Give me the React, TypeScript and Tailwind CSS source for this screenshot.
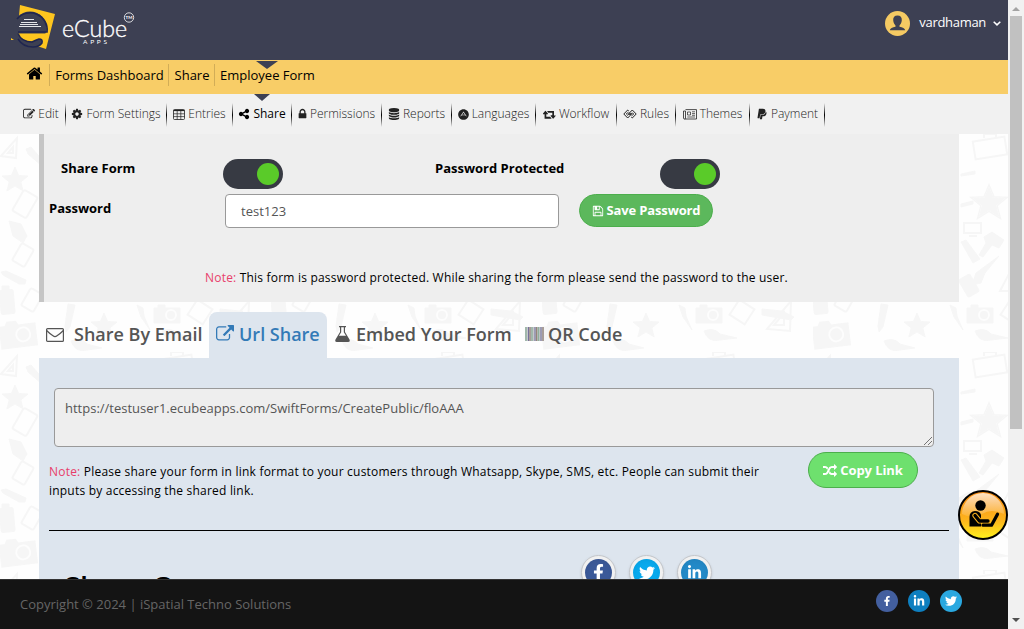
import type { ReactNode } from "react";
import { FaAdn, FaFacebookF, FaLinkedinIn, FaPaypal, FaTwitter } from "react-icons/fa";

const PATHS = {
  edit: "M888 1184l116-116-152-152-116 116v56h96v96h56zm440-720q-16-16-33 1l-350 350q-17 17-1 33t33-1l350-350q17-17 1-33zm80 594v190q0 119-84.5 203.5t-203.5 84.5h-832q-119 0-203.5-84.5t-84.5-203.5v-832q0-119 84.5-203.5t203.5-84.5h832q63 0 117 25 15 7 18 23 3 17-9 29l-49 49q-14 14-32 8-23-6-45-6h-832q-66 0-113 47t-47 113v832q0 66 47 113t113 47h832q66 0 113-47t47-113v-126q0-13 9-22l64-64q15-15 35-7t20 29zm-96-738l288 288-672 672h-288v-288zm444 132l-92 92-288-288 92-92q28-28 68-28t68 28l152 152q28 28 28 68t-28 68z",
  cog: "M1152 896q0-106-75-181t-181-75-181 75-75 181 75 181 181 75 181-75 75-181zm512-109v222q0 12-8 23t-20 13l-185 28q-19 54-39 91 35 50 107 138 10 12 10 25t-9 23q-27 37-99 108t-94 71q-12 0-26-9l-138-108q-44 23-91 38-16 136-29 186-7 28-36 28h-222q-14 0-24.5-8.5t-11.5-21.5l-28-184q-49-16-90-37l-141 107q-10 9-25 9-14 0-25-11-126-114-165-168-7-10-7-23 0-12 8-23 15-21 51-66.5t54-70.5q-27-50-41-99l-183-27q-13-2-21-12.5t-8-23.5v-222q0-12 8-23t19-13l186-28q14-46 39-92-40-57-107-138-10-12-10-24 0-10 9-23 26-36 98.5-107.5t94.5-71.5q13 0 26 10l138 107q44-23 91-38 16-136 29-186 7-28 36-28h222q14 0 24.5 8.5t11.5 21.5l28 184q49 16 90 37l142-107q9-9 24-9 13 0 25 10 129 119 165 170 7 8 7 22 0 12-8 23-15 21-51 66.5t-54 70.5q26 50 41 98l183 28q13 2 21 12.5t8 23.5z",
  share: "M1344 1024q133 0 226.5 93.5t93.5 226.5-93.5 226.5-226.5 93.5-226.5-93.5-93.5-226.5q0-12 2-34l-360-180q-92 86-218 86-133 0-226.5-93.5t-93.5-226.5 93.5-226.5 226.5-93.5q126 0 218 86l360-180q-2-22-2-34 0-133 93.5-226.5t226.5-93.5 226.5 93.5 93.5 226.5-93.5 226.5-226.5 93.5q-126 0-218-86l-360 180q2 22 2 34t-2 34l360 180q92-86 218-86z",
  lock: "M640 768h512v-192q0-106-75-181t-181-75-181 75-75 181v192zm832 96v576q0 40-28 68t-68 28h-960q-40 0-68-28t-28-68v-576q0-40 28-68t68-28h32v-192q0-184 132-316t316-132 316 132 132 316v192h32q40 0 68 28t28 68z",
  database: "M896 768q237 0 443-43t325-127v170q0 69-103 128t-280 93.5-385 34.5-385-34.5-280-93.5-103-128v-170q119 84 325 127t443 43zm0 768q237 0 443-43t325-127v170q0 69-103 128t-280 93.5-385 34.5-385-34.5-280-93.5-103-128v-170q119 84 325 127t443 43zm0-384q237 0 443-43t325-127v170q0 69-103 128t-280 93.5-385 34.5-385-34.5-280-93.5-103-128v-170q119 84 325 127t443 43zm0-1152q208 0 385 34.5t280 93.5 103 128v128q0 69-103 128t-280 93.5-385 34.5-385-34.5-280-93.5-103-128v-128q0-69 103-128t280-93.5 385-34.5z",
  home: "M1472 992v480q0 26-19 45t-45 19h-384v-384h-256v384h-384q-26 0-45-19t-19-45v-480q0-1 .5-3t.5-3l575-474 575 474q1 2 1 6zm223-69l-62 74q-8 9-21 11h-3q-13 0-21-7l-692-577-692 577q-12 8-24 7-13-2-21-11l-62-74q-8-10-7-23.5t11-21.5l719-599q32-26 76-26t76 26l244 204v-195q0-14 9-23t23-9h192q14 0 23 9t9 23v408l219 182q10 8 11 21.5t-7 23.5z",
  retweet: "M1216 1568q0 13-9.5 22.5t-22.5 9.5h-960q-8 0-13.5-2t-9-7-5.5-8-3-11.5-1-11.5-.5-13 .5-13v-600h-192q-26 0-45-19t-19-45q0-24 15-41l320-384q19-22 49-22t49 22l320 384q15 17 15 41 0 26-19 45t-45 19h-192v384h576q16 0 25 11l160 192q7 11 7 21zm640-416q0 24-15 41l-320 384q-20 23-49 23t-49-23l-320-384q-15-17-15-41 0-26 19-45t45-19h192v-384h-576q-16 0-25-12l-160-192q-7-9-7-20 0-13 9.5-22.5t22.5-9.5h960q8 0 13.5 2t9 7 5.5 8 3 11.5 1 11.5.5 13-.5 13v600h192q26 0 45 19t19 45z",
  random: "M666 481q-60 92-137 273-22-45-37-72.5t-40.5-63.5-51-56.5-63-35-81.5-14.5h-224q-14 0-23-9t-9-23v-192q0-14 9-23t23-9h224q250 0 410 225zm1126 799q0 14-9 23l-320 320q-9 9-23 9-13 0-22.5-9.5t-9.5-22.5v-192q-32 0-85 .5t-81 1-73-1-71-5-64-10.5-63-18.5-58-28.5-59-40-55-53.5-56-69.5q59-93 136-273 22 45 37 72.5t40.5 63.5 51 56.5 63 35 81.5 14.5h256v-192q0-14 9-23t23-9q12 0 24 10l319 319q9 9 9 23zm0-896q0 14-9 23l-320 320q-9 9-23 9-13 0-22.5-9.5t-9.5-22.5v-192h-256q-48 0-87 15t-69 45-51 61.5-45 77.5q-32 62-78 171-29 66-49.5 111t-54 105-64 100-74 83-90 68.5-106.5 42-128 16.5h-224q-14 0-23-9t-9-23v-192q0-14 9-23t23-9h224q48 0 87-15t69-45 51-61.5 45-77.5q32-62 78-171 29-66 49.5-111t54-105 64-100 74-83 90-68.5 106.5-42 128-16.5h256v-192q0-14 9-23t23-9q12 0 24 10l319 319q9 9 9 23z",
  external: "M1408 928v320q0 119-84.5 203.5t-203.5 84.5h-832q-119 0-203.5-84.5t-84.5-203.5v-832q0-119 84.5-203.5t203.5-84.5h704q14 0 23 9t9 23v64q0 14-9 23t-23 9h-704q-66 0-113 47t-47 113v832q0 66 47 113t113 47h832q66 0 113-47t47-113v-320q0-14 9-23t23-9h64q14 0 23 9t9 23zm384-864v512q0 26-19 45t-45 19-45-19l-176-176-652 652q-10 10-23 10t-23-10l-114-114q-10-10-10-23t10-23l652-652-176-176q-19-19-19-45t19-45 45-19h512q26 0 45 19t19 45z",
  save: "M512 1536h768v-384h-768v384zm896 0h128v-896q0-14-10-38.5t-20-34.5l-281-281q-10-10-34-20t-39-10v416q0 40-28 68t-68 28h-576q-40 0-68-28t-28-68v-416h-128v1280h128v-416q0-40 28-68t68-28h832q40 0 68 28t28 68v416zm-384-928v-320q0-13-9.5-22.5t-22.5-9.5h-192q-13 0-22.5 9.5t-9.5 22.5v320q0 13 9.5 22.5t22.5 9.5h192q13 0 22.5-9.5t9.5-22.5zm640 32v928q0 40-28 68t-68 28h-1344q-40 0-68-28t-28-68v-1344q0-40 28-68t68-28h928q40 0 88 20t76 48l280 280q28 28 48 76t20 88z",
};

function Glyph({ name, className, box = "0 0 1792 1792" }: { name: keyof typeof PATHS; className: string; box?: string }) {
  return (
    <svg viewBox={box} fill="currentColor" className={`shrink-0 ${className}`}>
      <path d={PATHS[name]} />
    </svg>
  );
}

function TableIcon() {
  return (
    <svg viewBox="0 0 12 11" className="h-[11px] w-3 shrink-0" fill="none" stroke="currentColor" strokeWidth=".8">
      <rect x=".5" y=".5" width="11" height="10" rx="1" />
      <path d="M.5 1.5h11" strokeWidth="1.2" />
      <path d="M4.2 2v8.5M7.8 2v8.5M.5 4.8h11M.5 7.6h11" strokeWidth=".7" />
    </svg>
  );
}

function RulesIcon() {
  return (
    <svg viewBox="0 0 14 10" className="h-2.5 w-3.5 shrink-0" fill="none" stroke="currentColor" strokeWidth="1">
      <path d="M5.8 2L4.7 1 .8 5l3.9 4 3.5-3.6L6.8 4 4.6 6.2 3.4 5l1.8-1.8" />
      <path d="M8.2 8l1.1 1 3.9-4-3.9-4-3.5 3.6L7.2 6l2.2-2.2L10.6 5 8.8 6.8" />
    </svg>
  );
}

function NewsIcon() {
  return (
    <svg viewBox="0 0 14 11" className="h-[11px] w-3.5 shrink-0" fill="none" stroke="currentColor" strokeWidth=".8">
      <path d="M2.5 .6h11v9.400h-12q-1 0-1-1V2h2v7q0 1-.8 1" />
      <path d="M4.5 3h3v3h-3zM9 2.800h3M9 4.600h3M9 6.300h3M4.300 8h7.700" strokeWidth=".7" />
    </svg>
  );
}

const STAR = "M0-13L3.6-4.5 13-4 5.8 2 8.2 11 0 6-8.2 11-5.8 2-13-4-3.6-4.5z";

/* Faint stationery wallpaper, repeated behind the page. */
function Wallpaper() {
  return (
    <svg className="absolute inset-0 h-full w-full" aria-hidden="true">
      <defs>
        <pattern id="doodles" width="271" height="218" patternUnits="userSpaceOnUse">
          <g fill="#f6f6f6" stroke="#f6f6f6">
            <g fill="none" strokeWidth="2">
              <path d="M1 22L17 4l-1 20zM8 19l5-6v6z" />
              <rect x="-8" y="-12" width="16" height="24" rx="2" transform="translate(25 70) rotate(30)" />
              <rect x="-7" y="-10" width="14" height="20" rx="2" transform="translate(23 121) rotate(30)" />
              <rect x="-7" y="-10" width="14" height="20" rx="2" transform="translate(32 166) rotate(30)" />
              <rect x="-16" y="-9" width="32" height="18" transform="translate(177 14) rotate(-9)" />
              <path d="M171 4v-4h12v4" />
              <rect x="151" y="89" width="17" height="10" />
              <path d="M156 102h8M187 157l22-42v42zM197 150l7-12v12z" />
              <rect x="-9" y="-9" width="18" height="18" transform="translate(200 178) rotate(33)" />
              <path d={STAR} transform="translate(176 69) scale(1.4)" strokeWidth="1" />
              <path d="M225 195l24-28-1 30zM232 191l10-12v12z" />
            </g>
            <path d={STAR} transform="translate(176 69) scale(1.15)" />
            <path d={STAR} transform="translate(15 46)" />
            <path d={STAR} transform="translate(104 192)" />
            <path d={STAR} transform="translate(235 84)" />
            <path d="M26 15l5-2 13 15-2 4-14-12z" />
            <path d="M9 87l12 3 6 12-4 7-10-7z" />
            <path d="M1 138l5-1 20 9-1 4-6 0-16-9z" />
            <rect x="0" y="156" width="14" height="24" rx="2" transform="rotate(-5 7 166)" />
            <path d="M2 152h7v4H2z" />
            <path d="M65 192l3-22 7 1-5 22-4 5z" />
            <path d="M137 171l6 3 1 8 6 14-9-13z" />
            <path d="M71 207q10-4 16 3l15 4-15 2q-12 3-16-9z" />
            <path d="M162 197q10-4 16 3l17 4-17 2q-12 3-16-9z" />
            <path d="M148 108l5-2 14 19-7 4zM171 103l8-5 12 8-5 8-7-3-9 12-4-2 7-12z" />
            <path d="M186 122l-14 17-4 10-9 2 4-12z" />
            <rect x="149" y="142" width="13" height="20" rx="2" transform="rotate(-30 155 151)" />
            <path d="M148 40l14-3v3l-14 2zM148 70l12-3v3l-12 3z" />
            <path d="M220 175l20 2 12 6-3 3-29-5z" />
            <g transform="translate(18 199) rotate(-7)">
              <path d="M-18-8h6l2-4h9l2 4h17v22h-36z" />
              <circle cx="5" cy="2" r="7" stroke="#fdfdfd" strokeWidth="2" />
            </g>
            <g transform="translate(167 180)">
              <path d="M-13-6h4v-3h7v3h15v15h-26z" />
              <circle cx="4" cy="1" r="5" stroke="#fdfdfd" strokeWidth="2" />
            </g>
          </g>
        </pattern>
      </defs>
      <rect width="100%" height="100%" fill="#fefefe" />
      <rect width="100%" height="100%" fill="url(#doodles)" />
    </svg>
  );
}

function Logo() {
  return (
    <svg viewBox="0 0 140 60" className="h-[60px] w-[140px]">
      <path d="M20 5l35 9-9 35-9-3 4-7-12 2-12-4z" fill="#fdc51f" />
      <path d="M11 38l3 2-3 0z" fill="#fdc51f" />
      <circle cx="30" cy="28" r="16.5" fill="#3d4053" />
      <path d="M17 19a17 17 0 0 1 30 13H18" fill="none" stroke="#20264f" strokeWidth="1.7" />
      <path d="M18 33.5h28.5q-1 4-4 6-3-1.5-6 1.5-5 1-9 0-8-2-9.5-7.5z" fill="#fdc51f" />
      <path d="M18 33.5q3.5 8.5 14 8.5 4-2 7-3 4 0 3 4-3 4-9 4-10 0-15-8" fill="#3d4053" stroke="#20264f" strokeWidth="1.5" />
      <path d="M24 19.5h10M21 22.5h16M19 26.5h22M20 24.5h18" stroke="#e5e6ea" strokeWidth="1" />
      <text x="62" y="36.5" fontFamily="Lato, 'Open Sans', sans-serif" fontSize="23.5" fontWeight="300" fill="#fff" stroke="#fff" strokeWidth=".35" textLength="65" lengthAdjust="spacingAndGlyphs">eCube</text>
      <text x="83" y="44" fontFamily="Lato, 'Open Sans', sans-serif" fontSize="6.5" fill="#fff" textLength="24">APPS</text>
      <circle cx="129" cy="17.5" r="4.7" fill="none" stroke="#fff" strokeWidth=".8" />
      <text x="129" y="19.3" fontFamily="Lato, sans-serif" fontSize="4.5" fontWeight="700" textAnchor="middle" fill="#fff">TM</text>
    </svg>
  );
}

function MenuItem({ width, icon, label, active }: { width: string; icon: ReactNode; label: string; active?: boolean }) {
  return (
    <li className={`relative flex h-10 shrink-0 items-center ${width} ${active ? "font-normal text-black" : "font-light text-[#222]"}`}>
      {active && <span className="absolute top-0 left-[21px] h-[7px] w-4 bg-[#3d4053] [clip-path:polygon(0_0,100%_0,50%_100%)]" />}
      <span className="flex flex-1 items-center justify-center gap-[3px] whitespace-nowrap">
        {icon}
        <span>{label}</span>
      </span>
      <span className="mt-0.5 h-6 w-px bg-linear-to-b from-transparent via-black to-transparent" />
    </li>
  );
}

function Toggle() {
  return (
    <span className="flex h-[30px] w-[60px] items-center justify-end rounded-full bg-[#373a43] pr-1">
      <span className="size-[22px] rounded-full bg-[#5acb29]" />
    </span>
  );
}

function Bubble({ color, children }: { color: string; children: ReactNode }) {
  return (
    <span className="flex size-[35px] items-center justify-center rounded-full border border-[#c4c7cb] bg-[#f1f1f1] shadow-sm">
      <span className={`flex size-[27px] items-center justify-center rounded-full text-white shadow-inner ${color}`}>{children}</span>
    </span>
  );
}

export default function App() {
  return (
    <div className="flex h-[629px] w-[1024px] overflow-hidden font-['Open_Sans',sans-serif] text-[13px] text-black">
      <div className="relative flex w-[1008px] flex-col">
        <header className="flex h-[60px] shrink-0 justify-between bg-[#3d4053]">
          <Logo />
          <div className="flex h-[46px] items-center pr-[7px] text-white">
            <svg viewBox="0 0 25 25" className="mr-[9px] size-[25px]">
              <circle cx="12.5" cy="12.5" r="12.5" fill="#f5ca63" />
              <path d="M12.5 4.5c3 0 4.500 2 4.300 4.700-.2 2.500-1.300 4.100-2.300 5.300v1.200c3 .6 5.500 1.500 5.700 3.500h-15.400c.2-2 2.700-2.900 5.700-3.500v-1.200c-1-1.200-2.100-2.800-2.300-5.300-.2-2.700 1.300-4.700 4.300-4.700z" fill="#3d4053" />
            </svg>
            <span className="tracking-[-0.3px]">vardhaman</span>
            <svg viewBox="0 0 8 5" className="ml-[7px] h-[5px] w-2" fill="none" stroke="#fff" strokeWidth="1.5"><path d="M.7.7L4 3.900 7.300.7" /></svg>
          </div>
        </header>

        <nav className="relative flex h-[34px] shrink-0 items-center bg-[#f8cd67] pl-[26px] text-[13px]">
          <span className="absolute top-px left-64 h-2 w-[22px] bg-[#3d4053] [clip-path:polygon(0_0,100%_0,50%_100%)]" />
          <div className="flex w-6 items-center justify-between pb-[7px]">
            <Glyph name="home" className="h-[17px] w-[17px]" />
          </div>
          <span className="mb-1 -ml-px h-[22px] w-px bg-[#d2ad57]" />
          <span className="w-[119px] pb-[3px] text-center whitespace-nowrap">Forms Dashboard</span>
          <span className="mb-1 -ml-px h-[22px] w-px bg-[#d2ad57]" />
          <span className="w-[46px] pb-[3px] text-center">Share</span>
          <span className="mb-1 -ml-px h-[22px] w-px bg-[#d2ad57]" />
          <span className="pb-[3px] pl-[5px] whitespace-nowrap">Employee Form</span>
        </nav>

        <ul className="flex h-10 shrink-0 bg-[#f1f1f1] pl-[17px] text-[12px]">
          <MenuItem width="w-[49px]" label="Edit" icon={<Glyph name="edit" className="size-3" />} />
          <MenuItem width="w-[101px]" label="Form Settings" icon={<Glyph name="cog" className="size-3" />} />
          <MenuItem width="w-[66px]" label="Entries" icon={<TableIcon />} />
          <MenuItem width="w-[59px]" label="Share" active icon={<Glyph name="share" className="size-3" />} />
          <MenuItem width="w-[90px]" label="Permissions" icon={<Glyph name="lock" box="256 0 1280 1792" className="h-3 w-[9px]" />} />
          <MenuItem width="w-[70px]" label="Reports" icon={<Glyph name="database" className="h-3 w-3" />} />
          <MenuItem width="w-[84px]" label="Languages" icon={<FaAdn className="size-[11px]" />} />
          <MenuItem width="w-[81px]" label="Workflow" icon={<Glyph name="retweet" box="-32 0 1920 1792" className="h-3 w-[13px]" />} />
          <MenuItem width="w-[59px]" label="Rules" icon={<RulesIcon />} />
          <MenuItem width="w-[74px]" label="Themes" icon={<NewsIcon />} />
          <MenuItem width="w-[75px]" label="Payment" icon={<FaPaypal className="size-3" />} />
        </ul>

        <main className="relative min-h-0 flex-1 overflow-hidden">
          <Wallpaper />
          <div className="relative ml-[39px] w-[920px]">
            <section className="h-[168px] border-l-[5px] border-[#c5c5c5] bg-[#eee] pt-[25px]">
              <div className="flex h-[35px] items-start">
                <b className="w-[179px] pl-[17px]">Share Form</b>
                <Toggle />
                <b className="ml-[152px] w-[225px]">Password Protected</b>
                <Toggle />
              </div>
              <div className="flex items-start">
                <b className="w-[181px] pt-[5px] pl-[5px]">Password</b>
                <div className="flex h-[34px] w-[334px] items-center rounded border border-[#999] bg-white px-[15px] pt-0.5 text-[#555]">test123</div>
                <button className="ml-5 flex h-[33px] w-[134px] items-center justify-center gap-[3px] rounded-full border border-[#4cae4c] bg-[#5cb85c] font-bold tracking-[-0.15px] text-white">
                  <Glyph name="save" className="size-3" />
                  Save Password
                </button>
              </div>
              <p className="mt-[41px] pl-[161px] text-[12px] font-medium tracking-[0.2px] whitespace-nowrap"><span className="text-[#e83e6b]">Note:</span> This form is password protected. While sharing the form please send the password to the user.</p>
            </section>

            <div className="flex h-14 items-end text-[18px] font-semibold whitespace-nowrap text-[#555]">
              <div className="flex h-[46px] w-[170px] items-center pb-0.5 pl-[7px]">
                <svg viewBox="0 0 18 14" className="mt-0.5 mr-[10px] h-3.5 w-[18px]" fill="none" stroke="currentColor" strokeWidth="1.2"><rect x=".6" y=".6" width="16.8" height="12.8" rx="1" /><path d="M.6 2.500q3 3 6.400 5.300 2 1.500 4 0 3.400-2.300 6.400-5.300" /></svg>
                Share By Email
              </div>
              <div className="flex h-[46px] w-[118px] items-center gap-[5px] rounded-t-lg bg-[#dde5ee] pb-0.5 pl-[7px] text-[#337ab7]">
                <Glyph name="external" className="size-[18px]" />
                Url Share
              </div>
              <div className="flex h-[46px] w-[198px] items-center gap-1.5 pb-0.5 pl-2">
                <svg viewBox="0 0 15 16" className="h-4 w-[15px]" fill="currentColor"><path d="M4 0h7v1.200h-1V6l4.500 7.500Q15.500 16 13 16H2Q-.5 16 .5 13.500L5 6V1.200H4zM6.200 1.200v5L4 9.800h7L8.800 6.200v-5z" /></svg>
                Embed Your Form
              </div>
              <div className="flex h-[46px] items-center gap-1 pb-0.5">
                <svg viewBox="0 0 19 14" className="h-3.5 w-[19px]">
                  <rect width="19" height="14" fill="#c5c8cc" />
                  <path d="M1 0v14M7 0v14M13.500 0v14" stroke="#8fb09b" strokeWidth="1.3" />
                  <path d="M3.500 0v14M10 0v14M16 0v14" stroke="#77719b" strokeWidth="1" />
                  <path d="M5 0v14M11.700 0v14M18 0v14" stroke="#8b7566" strokeWidth="1" />
                </svg>
                QR Code
              </div>
            </div>

            <section className="h-[300px] bg-[#dde5ee] px-[10px] pt-[30px]">
              <div className="relative ml-[5px] h-[59px] w-[880px] rounded border border-[#999] bg-[#eee] px-[10px] pt-[10px] text-[#555]">
                https://testuser1.ecubeapps.com/SwiftForms/CreatePublic/floAAA
                <svg viewBox="0 0 8 8" className="absolute right-px bottom-px size-2" stroke="#555" strokeWidth=".8"><path d="M0 8L8 0M4 8l4-4" /></svg>
              </div>
              <div className="flex items-start justify-between pr-[31px]">
                <p className="w-[730px] pt-[15px] text-[12px] leading-[19px] font-medium tracking-[0.21px]"><span className="text-[#e83e6b]">Note:</span> Please share your form in link format to your customers through Whatsapp, Skype, SMS, etc. People can submit their inputs by accessing the shared link.</p>
                <button className="mt-[5px] flex h-9 w-[110px] items-center justify-center gap-[3px] rounded-full border border-[#4cae4c] bg-[#6ee06e] pt-px font-bold tracking-[-0.1px] text-white">
                  <Glyph name="random" className="size-3.5" />
                  Copy Link
                </button>
              </div>
              <hr className="mt-[30px] border-black" />
              <div className="flex pt-6">
                <h2 className="w-[532px] pt-[9px] pl-[15px] text-[29px] leading-[45px] font-semibold">Share On</h2>
                <div className="flex gap-[13px]">
                  <Bubble color="bg-[#3b5998]"><FaFacebookF className="size-[17px]" /></Bubble>
                  <Bubble color="bg-[#08a9ed]"><FaTwitter className="size-4" /></Bubble>
                  <Bubble color="bg-[#2389c7]"><FaLinkedinIn className="size-[15px]" /></Bubble>
                </div>
              </div>
            </section>
          </div>
        </main>

        <svg viewBox="0 0 50 50" className="absolute top-[490px] left-[958px] size-[50px]">
          <defs>
            <linearGradient id="badge" x1="0" y1="0" x2="0" y2="1">
              <stop offset="0" stopColor="#f88c16" />
              <stop offset=".6" stopColor="#fdb31c" />
              <stop offset="1" stopColor="#fff31e" />
            </linearGradient>
            <linearGradient id="gloss" x1="0" y1="0" x2="0" y2="1">
              <stop offset="0" stopColor="#fff" stopOpacity=".75" />
              <stop offset="1" stopColor="#fff" stopOpacity=".1" />
            </linearGradient>
          </defs>
          <circle cx="25" cy="25" r="24" fill="url(#badge)" stroke="#000" strokeWidth="2" />
          <path d="M4 24a21 21 0 0 1 42 0q-13-6-22 0-10 5-20 0z" fill="url(#gloss)" />
          <circle cx="22.5" cy="15.5" r="5.2" />
          <path d="M11.5 36.5V27q0-5.500 5.500-6 5 0 6 4v11.500z" />
          <path d="M17 25.500l4.500 5.500H30" fill="none" stroke="#fdb31c" strokeWidth="5.2" strokeLinejoin="round" strokeLinecap="round" />
          <path d="M17 25.500l4.500 5.500H30M25 35.200h8.500l6-11" fill="none" stroke="#000" strokeWidth="3.3" strokeLinejoin="round" strokeLinecap="round" />
        </svg>

        <footer className="flex h-[50px] shrink-0 items-center justify-between border-t border-[#333] bg-[#141414] pr-[46px] pl-5 text-[#666]">
          <span>Copyright © 2024 | iSpatial Techno Solutions</span>
          <div className="flex gap-[10px] pb-2 text-white">
            <span className="flex size-[22px] items-center justify-center rounded-full bg-[#435f9f]"><FaFacebookF className="size-[10px]" /></span>
            <span className="flex size-[22px] items-center justify-center rounded-full bg-[#0e7fc0]"><FaLinkedinIn className="size-3" /></span>
            <span className="flex size-[22px] items-center justify-center rounded-full bg-[#2aa8e0]"><FaTwitter className="size-3" /></span>
          </div>
        </footer>
      </div>

      <div className="flex w-4 flex-col items-center bg-[#f1f1f1]">
        <div className="flex h-4 items-center"><span className="mt-0.5 h-1 w-2 bg-[#a3a3a3] [clip-path:polygon(50%_0,100%_100%,0_100%)]" /></div>
        <div className="h-[413px] w-3 bg-[#c1c1c1]" />
        <span className="mt-auto mb-[7px] h-1 w-2 bg-[#505050] [clip-path:polygon(0_0,100%_0,50%_100%)]" />
      </div>
    </div>
  );
}
